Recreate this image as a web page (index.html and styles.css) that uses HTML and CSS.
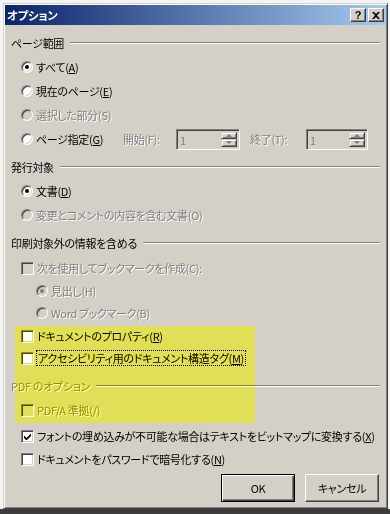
FILE: index.html
```html
<!DOCTYPE html>
<html lang="ja">
<head>
    <meta charset="UTF-8">
    <meta name="viewport" content="width=device-width, initial-scale=1.0">
    <title>オプション</title>
    <link rel="stylesheet" href="styles.css">
</head>
<body>
    <div class="screen">
        <div class="dialog">
            <div class="titlebar">
                <span class="title">オプション</span>
                <div class="title-buttons">
                    <span class="tbtn help">?</span>
                    <span class="tbtn">
                        <svg width="8" height="7" viewBox="0 0 8 7"><path d="M0 0h2l2 2 2-2h2L5 3.5 8 7H6L4 5 2 7H0l3-3.5z" fill="#000"/></svg>
                    </span>
                </div>
            </div>

            <div class="content">
                <!-- ページ範囲 -->
                <div class="group">ページ範囲</div>
                <div class="row"><span class="radio checked"></span><span>すべて(<u>A</u>)</span></div>
                <div class="row"><span class="radio"></span><span>現在のページ(<u>E</u>)</span></div>
                <div class="row disabled"><span class="radio"></span><span>選択した部分(S)</span></div>
                <div class="row">
                    <span class="radio"></span>
                    <span class="range-label">ページ指定(<u>G</u>)</span>
                    <span class="spin-label disabled">開始(F):</span>
                    <div class="spin">
                        <span class="spin-value">1</span>
                        <div class="spin-btns">
                            <span class="spin-btn"><i class="arrow-up"></i></span>
                            <span class="spin-btn"><i class="arrow-down"></i></span>
                        </div>
                    </div>
                    <span class="spin-label end disabled">終了(T):</span>
                    <div class="spin narrow">
                        <span class="spin-value">1</span>
                        <div class="spin-btns">
                            <span class="spin-btn"><i class="arrow-up"></i></span>
                            <span class="spin-btn"><i class="arrow-down"></i></span>
                        </div>
                    </div>
                </div>

                <!-- 発行対象 -->
                <div class="group gap-4">発行対象</div>
                <div class="row"><span class="radio checked"></span><span>文書(<u>D</u>)</span></div>
                <div class="row disabled"><span class="radio"></span><span>変更とコメントの内容を含む文書(O)</span></div>

                <!-- 印刷対象外の情報 -->
                <div class="group gap-3 tall">印刷対象外の情報を含める</div>
                <div class="row disabled"><span class="check"></span><span>次を使用してブックマークを作成(C):</span></div>
                <div class="row sub small disabled"><span class="radio checked"></span><span>見出し(H)</span></div>
                <div class="row sub small disabled"><span class="radio"></span><span>Word&nbsp;ブックマーク(B)</span></div>
                <div class="row"><span class="check"></span><span>ドキュメントのプロパティ(<u>R</u>)</span></div>
                <div class="row tiny"><span class="check"></span><span class="focus">アクセシビリティ用のドキュメント構造タグ(<u>M</u>)</span></div>

                <!-- PDF のオプション -->
                <div class="group gap-6 disabled">PDF&nbsp;のオプション</div>
                <div class="row disabled"><span class="check"></span><span>PDF/A&nbsp;準拠(/)</span></div>
                <div class="row gap-2">
                    <span class="check">
                        <svg width="7" height="7" viewBox="0 0 7 7"><polygon points="0,2.5 2.5,5 7,0.5 7,3 2.5,7.5 0,5" fill="#000"/></svg>
                    </span>
                    <span>フォントの埋め込みが不可能な場合はテキストをビットマップに変換する(<u>X</u>)</span>
                </div>
                <div class="row small"><span class="check"></span><span>ドキュメントをパスワードで暗号化する(<u>N</u>)</span></div>

                <div class="actions">
                    <span class="btn default">OK</span>
                    <span class="btn">キャンセル</span>
                </div>
            </div>

            <!-- 蛍光ペンの注釈 -->
            <div class="marker"></div>
        </div>
    </div>
</body>
</html>
```

FILE: styles.css
```css
* {
    margin: 0;
    padding: 0;
    box-sizing: border-box;
}

body {
    font-family: "Noto Sans CJK JP", sans-serif;
    font-size: 11px;
    letter-spacing: -0.3px;
    font-feature-settings: "palt";
    color: #000;
    background: #f4f4f4;
}

.screen {
    height: 514px;
    padding: 3px 2px 0 3px;
    background: linear-gradient(to bottom, #f4f4f4 509px, #3c3c3c 509px);
    overflow: hidden;
}

.dialog {
    position: relative;
    height: 506px;
    padding: 1px;
    background: #d4d0c8;
    border: 1px solid;
    border-color: #d4d0c8 #404040 #404040 #d4d0c8;
    box-shadow: inset 1px 1px #fff, inset -1px -1px #808080;
    display: flex;
    flex-direction: column;
}

/* タイトルバー */
.titlebar {
    height: 20px;
    padding: 0 2px;
    background: linear-gradient(to right, #0a246a, #a6caf0);
    display: flex;
    align-items: center;
    justify-content: space-between;
}

.title {
    color: #fff;
    font-weight: bold;
    font-size: 11.5px;
}

.title-buttons {
    display: flex;
    gap: 2px;
}

.tbtn {
    width: 16px;
    height: 14px;
    background: #d4d0c8;
    border: 1px solid;
    border-color: #fff #404040 #404040 #fff;
    box-shadow: inset -1px -1px #808080;
    display: flex;
    align-items: center;
    justify-content: center;
}

.tbtn.help {
    font-family: "Liberation Sans", sans-serif;
    font-weight: bold;
    font-size: 11px;
    letter-spacing: 0;
    line-height: 1;
}

/* 本体 */
.content {
    padding: 6px 6px 0 6px;
    display: flex;
    flex-direction: column;
}

.group {
    height: 24px;
    display: flex;
    align-items: center;
}

.group::after {
    content: "";
    flex: 1;
    margin-left: 6px;
    border-top: 1px solid #808080;
    border-bottom: 1px solid #fff;
}

.group.tall {
    height: 26px;
}

.gap-2 { margin-top: 2px; }
.gap-3 { margin-top: 3px; }
.gap-4 { margin-top: 4px; }
.gap-6 { margin-top: 6px; }

.row {
    height: 24px;
    padding-left: 10px;
    display: flex;
    align-items: center;
    gap: 3px;
    white-space: nowrap;
}

.row.sub {
    padding-left: 25px;
}

.row.small {
    height: 22px;
}

.row.tiny {
    height: 20px;
}

.disabled {
    color: #808080;
    text-shadow: 1px 1px #fff;
}

.focus {
    outline: 1px dotted #000;
    outline-offset: 0;
    padding: 0 1px;
    line-height: 14px;
}

/* ラジオボタン */
.radio {
    position: relative;
    flex: none;
    width: 12px;
    height: 12px;
    border-radius: 50%;
    background: #fff;
    border: 1px solid;
    border-color: #808080 #fff #fff #808080;
    box-shadow: inset 1px 1px #404040, inset -1px -1px #d4d0c8;
}

.radio.checked::after {
    content: "";
    position: absolute;
    left: 3px;
    top: 3px;
    width: 4px;
    height: 4px;
    border-radius: 50%;
    background: #000;
}

.disabled .radio {
    background: #d4d0c8;
}

.disabled .radio.checked::after {
    background: #808080;
}

/* チェックボックス */
.check {
    flex: none;
    width: 13px;
    height: 13px;
    background: #fff;
    border: 1px solid;
    border-color: #808080 #fff #fff #808080;
    box-shadow: inset 1px 1px #404040, inset -1px -1px #d4d0c8;
    display: flex;
    align-items: center;
    justify-content: center;
}

.disabled .check {
    background: #d4d0c8;
}

/* ページ指定 */
.range-label {
    width: 84px;
}

.spin-label {
    width: 50px;
}

.spin-label.end {
    width: 53px;
    margin-left: 7px;
}

.spin {
    width: 64px;
    height: 21px;
    padding: 2px;
    background: #d4d0c8;
    border: 1px solid;
    border-color: #808080 #fff #fff #808080;
    box-shadow: inset 1px 1px #404040, inset -1px -1px #d4d0c8;
    display: flex;
}

.spin.narrow {
    width: 62px;
}

.spin-value {
    flex: 1;
    padding-left: 1px;
    line-height: 16px;
    color: #808080;
}

.spin-btns {
    width: 16px;
    display: flex;
    flex-direction: column;
}

.spin-btn {
    flex: 1;
    background: #d4d0c8;
    border: 1px solid;
    border-color: #d4d0c8 #404040 #404040 #d4d0c8;
    box-shadow: inset 1px 1px #fff, inset -1px -1px #808080;
    display: flex;
    align-items: center;
    justify-content: center;
}

.arrow-up,
.arrow-down {
    width: 0;
    height: 0;
    border-left: 3px solid transparent;
    border-right: 3px solid transparent;
}

.arrow-up {
    border-bottom: 3px solid #808080;
}

.arrow-down {
    border-top: 3px solid #808080;
}

/* ボタン */
.actions {
    margin-top: 4px;
    padding-right: 1px;
    display: flex;
    justify-content: flex-end;
    gap: 10px;
}

.btn {
    width: 74px;
    height: 28px;
    background: #d4d0c8;
    border: 1px solid;
    border-color: #fff #404040 #404040 #fff;
    box-shadow: inset -1px -1px #808080;
    display: flex;
    align-items: center;
    justify-content: center;
}

.btn.default {
    border-color: #000;
    box-shadow: inset 1px 1px #fff, inset -1px -1px #404040, inset -2px -2px #808080;
}

/* 蛍光ペン */
.marker {
    position: absolute;
    left: 11px;
    top: 322px;
    width: 240px;
    height: 97px;
    background: #ebe962;
    mix-blend-mode: color;
    pointer-events: none;
}
```
